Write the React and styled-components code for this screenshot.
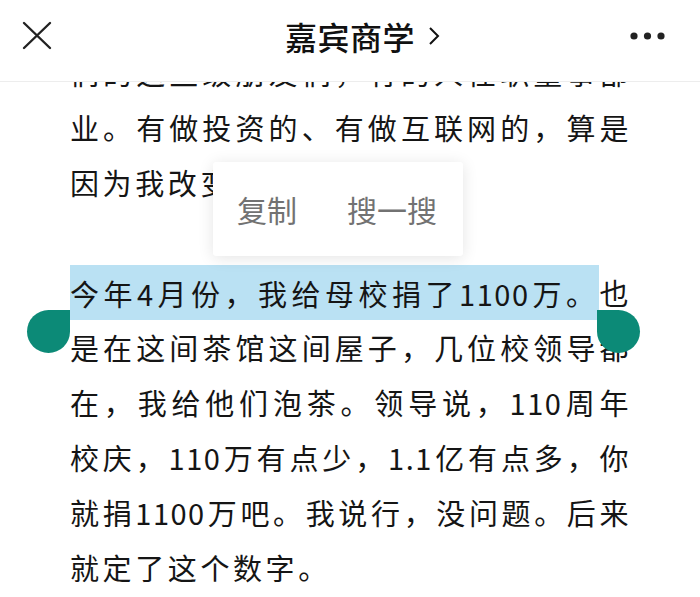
import React from 'react';
import styled, {createGlobalStyle} from 'styled-components';

const GlobalStyle = createGlobalStyle`
    html, body {
        margin: 0;
        padding: 0;
        background: #fff;
    }
    body {
        font-family: "Noto Sans CJK SC", "Noto Sans", sans-serif;
        color: #151515;
    }
`;

const Page = styled.div`
    position: relative;
    width: 700px;
    height: 597px;
    overflow: hidden;
    background: #fff;
`;

const Header = styled.header`
    position: absolute;
    top: 0;
    left: 0;
    right: 0;
    height: 82px;
    box-sizing: border-box;
    border-bottom: 1px solid #ededed;
    background: #fff;
    display: grid;
    grid-template-columns: 1fr auto 1fr;
    align-items: center;
    padding: 0 34px 10px 22px;
    z-index: 2;
`;

const IconButton = styled.button`
    border: 0;
    background: none;
    padding: 0;
    height: 34px;
    display: flex;
    align-items: center;
    justify-self: ${props => props.$end ? 'end' : 'start'};
    color: #222;
`;

const Title = styled.div`
    display: flex;
    align-items: center;
    gap: 12px;
    padding-left: 38px;
    font-size: 32px;
    font-weight: 500;
    color: #111;
    letter-spacing: 0.5px;
`;

const Article = styled.article`
    padding: 45px 70px 0 70px;
`;

const Paragraph = styled.p`
    margin: 0 0 55px 0;
    font-size: 29px;
    line-height: 55px;
`;

const Line = styled.span`
    display: block;
    height: 55px;
    letter-spacing: ${props => props.$last ? '3.6px' : '1.5px'};
    text-align: justify;
    text-align-last: ${props => props.$last ? 'left' : 'justify'};
`;

const Selected = styled.span`
    background: #bae1f3;
    padding: 6.5px 0;
`;

const Popup = styled.div`
    position: absolute;
    left: 213px;
    top: 162px;
    width: 250px;
    height: 94px;
    box-sizing: border-box;
    background: #fff;
    border-radius: 3px;
    box-shadow: 0 2px 16px rgba(0, 0, 0, 0.11);
    display: flex;
    align-items: center;
    gap: 50px;
    padding: 0 0 0 24px;
    z-index: 3;
`;

const PopupAction = styled.span`
    font-size: 30px;
    color: #727272;
`;

const Handle = styled.div`
    position: absolute;
    top: 310px;
    left: ${props => props.$right ? '597px' : '27px'};
    width: 43px;
    height: 43px;
    background: #0c8a77;
    border-radius: ${props => props.$right ? '0 50% 50% 50%' : '50% 0 50% 50%'};
    z-index: 3;
`;

const CloseIcon = () => (
    <svg width="30" height="30" viewBox="0 0 30 30">
        <path d="M2 2 L28 27 M28 2 L2 27" stroke="currentColor" strokeWidth="2.4" strokeLinecap="round" fill="none"/>
    </svg>
);

const Chevron = () => (
    <svg width="14" height="20" viewBox="0 0 14 20">
        <path d="M3 2 L11 10 L3 18" stroke="#111" strokeWidth="2" fill="none" strokeLinejoin="miter"/>
    </svg>
);

const MoreIcon = () => (
    <svg width="36" height="10" viewBox="0 0 36 10">
        <circle cx="4" cy="5" r="3.6" fill="#222"/>
        <circle cx="17.5" cy="5" r="3.6" fill="#222"/>
        <circle cx="31" cy="5" r="3.6" fill="#222"/>
    </svg>
);

export default function App() {
    return (
        <Page>
            <GlobalStyle/>
            <Header>
                <IconButton><CloseIcon/></IconButton>
                <Title>嘉宾商学<Chevron/></Title>
                <IconButton $end><MoreIcon/></IconButton>
            </Header>
            <Article>
                <Paragraph>
                    <Line>们的这些级朋友们，有的人任职董事部</Line>
                    <Line>业。有做投资的、有做互联网的，算是</Line>
                    <Line $last>因为我改变了他们。</Line>
                </Paragraph>
                <Paragraph>
                    <Line><Selected>今年4月份，我给母校捐了1100万。</Selected>也</Line>
                    <Line>是在这间茶馆这间屋子，几位校领导都</Line>
                    <Line>在，我给他们泡茶。领导说，110周年</Line>
                    <Line>校庆，110万有点少，1.1亿有点多，你</Line>
                    <Line>就捐1100万吧。我说行，没问题。后来</Line>
                    <Line $last>就定了这个数字。</Line>
                </Paragraph>
            </Article>
            <Popup>
                <PopupAction>复制</PopupAction>
                <PopupAction>搜一搜</PopupAction>
            </Popup>
            <Handle/>
            <Handle $right/>
        </Page>
    );
}
